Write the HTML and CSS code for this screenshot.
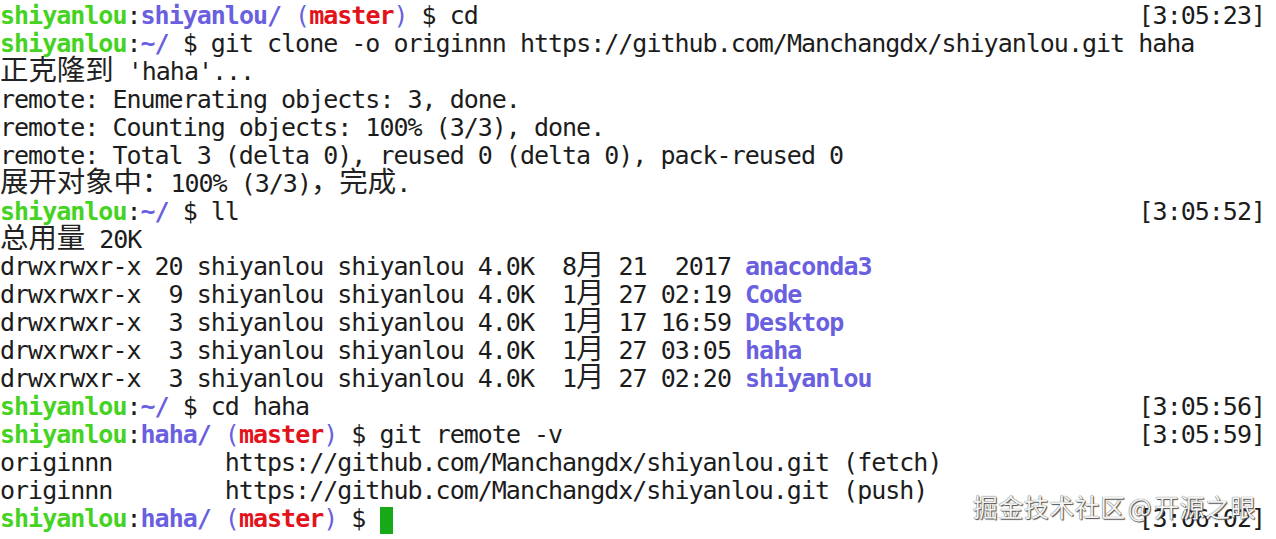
FILE: index.html
```html
<!DOCTYPE html>
<html lang="zh">
<head>
<meta charset="utf-8">
<title>terminal</title>
<link rel="stylesheet" href="styles.css">
</head>
<body>
<div class="term">
  <div class="row"><span class="l"><span class="g">shiyanlou</span>:<span class="b">shiyanlou/</span> <span class="p">(</span><span class="r">master</span><span class="p">)</span> $ cd</span><span class="ts">[3:05:23]</span></div>
  <div class="row"><span class="l"><span class="g">shiyanlou</span>:<span class="b">~/</span> $ git clone -o originnn https://github.com/Manchangdx/shiyanlou.git haha</span></div>
  <div class="row"><span class="l"><span class="cj">正克隆到</span> 'haha'...</span></div>
  <div class="row"><span class="l">remote: Enumerating objects: 3, done.</span></div>
  <div class="row"><span class="l">remote: Counting objects: 100% (3/3), done.</span></div>
  <div class="row"><span class="l">remote: Total 3 (delta 0), reused 0 (delta 0), pack-reused 0</span></div>
  <div class="row"><span class="l"><span class="cj">展开对象中：</span>100% (3/3)<span class="cj">，完成</span>.</span></div>
  <div class="row"><span class="l"><span class="g">shiyanlou</span>:<span class="b">~/</span> $ ll</span><span class="ts">[3:05:52]</span></div>
  <div class="row"><span class="l"><span class="cj">总用量</span> 20K</span></div>
  <div class="row"><span class="l">drwxrwxr-x 20 shiyanlou shiyanlou 4.0K  8<span class="cj">月</span> 21  2017 <span class="b">anaconda3</span></span></div>
  <div class="row"><span class="l">drwxrwxr-x  9 shiyanlou shiyanlou 4.0K  1<span class="cj">月</span> 27 02:19 <span class="b">Code</span></span></div>
  <div class="row"><span class="l">drwxrwxr-x  3 shiyanlou shiyanlou 4.0K  1<span class="cj">月</span> 17 16:59 <span class="b">Desktop</span></span></div>
  <div class="row"><span class="l">drwxrwxr-x  3 shiyanlou shiyanlou 4.0K  1<span class="cj">月</span> 27 03:05 <span class="b">haha</span></span></div>
  <div class="row"><span class="l">drwxrwxr-x  3 shiyanlou shiyanlou 4.0K  1<span class="cj">月</span> 27 02:20 <span class="b">shiyanlou</span></span></div>
  <div class="row"><span class="l"><span class="g">shiyanlou</span>:<span class="b">~/</span> $ cd haha</span><span class="ts">[3:05:56]</span></div>
  <div class="row"><span class="l"><span class="g">shiyanlou</span>:<span class="b">haha/</span> <span class="p">(</span><span class="r">master</span><span class="p">)</span> $ git remote -v</span><span class="ts">[3:05:59]</span></div>
  <div class="row"><span class="l">originnn        https://github.com/Manchangdx/shiyanlou.git (fetch)</span></div>
  <div class="row"><span class="l">originnn        https://github.com/Manchangdx/shiyanlou.git (push)</span></div>
  <div class="row"><span class="l"><span class="g">shiyanlou</span>:<span class="b">haha/</span> <span class="p">(</span><span class="r">master</span><span class="p">)</span> $ <span class="cursor"></span></span><span class="ts">[3:06:02]</span></div>
  <div class="wm">掘金技术社区<span class="at">@</span>开源之眼</div>
</div>
</body>
</html>
```

FILE: styles.css
```css
html, body {
  margin: 0;
  padding: 0;
  background: #ffffff;
}

.term {
  position: relative;
  width: 1265px;
  height: 539px;
  padding-top: 2px;
  box-sizing: border-box;
  font-family: "DejaVu Sans Mono", "Noto Sans CJK SC", monospace;
  font-size: 25px;
  letter-spacing: -1px;
  color: #1c1c1c;
  overflow: hidden;
}

.row {
  display: flex;
  justify-content: space-between;
  height: 27.95px;
  line-height: 27.95px;
  white-space: pre;
}

.g {
  color: #45d322;
  font-weight: bold;
}

.b {
  color: #6a5fdf;
  font-weight: bold;
}

.p {
  color: #6a5fdf;
}

.r {
  color: #e3131c;
  font-weight: bold;
}

.cj {
  font-family: "Noto Sans CJK SC", sans-serif;
  font-size: 28.42px;
  letter-spacing: 0;
  line-height: 0;
  color: #222222;
}

.cursor {
  display: inline-block;
  width: 13px;
  height: 27px;
  margin-left: 1px;
  vertical-align: top;
  margin-top: 2px;
  background: #17a917;
}

.wm {
  position: absolute;
  right: 9px;
  top: 489px;
  font-family: "Noto Sans CJK SC", sans-serif;
  font-size: 25px;
  letter-spacing: 0.5px;
  line-height: 34px;
  color: #f4f4f4;
  text-shadow: 0 0 1px #2a2a2a, 1px 1px 1px #555555;
}

.wm .at {
  margin: 0 2px;
}
```
